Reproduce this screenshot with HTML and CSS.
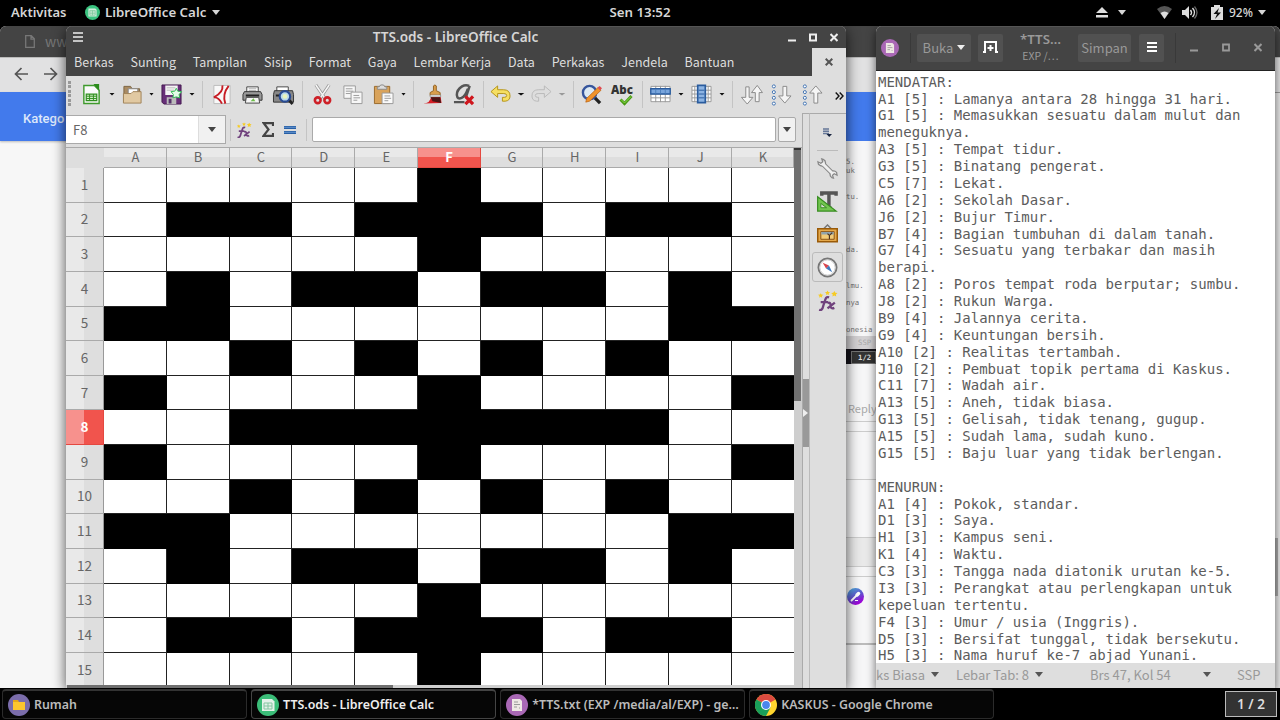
FILE: index.html
```html
<!DOCTYPE html>
<html lang="id">
  <head>
    <meta charset="UTF-8" />
    <title>Desktop</title>
    <meta name="viewport" content="width=device-width, initial-scale=1.0" />
    <link rel="stylesheet" href="styles.css">
  </head>
  <body>
    <header class="topbar">
      <span class="activities">Aktivitas</span>
      <svg class="app-icon" width="15" height="15" viewBox="0 0 22 22"><circle cx="11" cy="11" r="11" fill="#3bc480"/><path d="M5 5h10l2 2v10H5z" fill="#d7efdf"/><path d="M7 8h8v7H7zM7 10.3h8M7 12.7h8M11 8v7" fill="none" stroke="#75c797"/></svg>
      <span class="app-name">LibreOffice Calc</span>
      <i class="caret"></i>
      <span class="clock">Sen 13:52</span>
      <div class="tray">
        <svg width="12" height="11" viewBox="0 0 12 11"><path d="M6 0l6 6H0zM0 8h12v2.500H0z" fill="#ddd"/></svg>
        <i class="caret eject-caret"></i>
        <svg class="wifi" width="15" height="13" viewBox="0 0 15 13"><path d="M0 3Q7.500-3 15 3L7.500 13z" fill="#555"/><path d="M3.500 7q4-3 8 0l-4 6z" fill="#ddd"/></svg>
        <svg class="sound" width="16" height="13" viewBox="0 0 16 13"><path d="M0 4h3l4-4v13L3 9H0z" fill="#ddd"/><path d="M8.500 4q2 2.500 0 5M10.500 2q4 4.500 0 9" fill="none" stroke="#ddd" stroke-width="1.400"/><path d="M12.500.5q5 6 0 12" fill="none" stroke="#666" stroke-width="1.300"/></svg>
        <svg class="battery" width="12" height="15" viewBox="0 0 12 15"><path d="M0 2h3V0h6v2h3v13H0z" fill="#ddd"/><path d="M8 3L2.500 9H6l-2 5 6-6.500H6.500z" fill="#111"/></svg>
        <span>92%</span>
        <i class="caret"></i>
      </div>
    </header>

    <main class="desktop">
      <section class="chrome">
        <div class="chrome-tabs">
          <svg width="10" height="13" viewBox="0 0 10 13"><path d="M.7.700h5.600l3 3v8.600H.7zM6 .7v3.500h3.500" fill="none" stroke="#777" stroke-width="1.300"/></svg>
          <span>www</span>
        </div>
        <div class="chrome-nav">
          <svg width="14" height="14" viewBox="0 0 14 14"><path d="M14 7H1.500M7.500 1l-6 6 6 6" fill="none" stroke="#555" stroke-width="1.700"/></svg>
          <svg width="14" height="14" viewBox="0 0 14 14"><path d="M0 7h12.500M6.500 1l6 6-6 6" fill="none" stroke="#555" stroke-width="1.700"/></svg>
        </div>
        <div class="chrome-view">
          <div class="chrome-doc">
            <div class="chrome-head">Katego</div>
            <div class="page-strip">
              <div class="shot">
                <span class="shot-a">5.<br>uk</span>
                <span class="shot-b">tu.</span>
                <span class="shot-c">da.</span>
                <span class="shot-d">lmu.</span>
                <span class="shot-e">nya</span>
                <span class="shot-f">onesia</span>
                <span class="shot-status">SSP</span>
                <span class="shot-task"><b>1/2</b></span>
              </div>
              <div class="reply">Reply</div>
              <div class="line-gap"></div>
              <div class="box box-a"></div>
              <div class="box box-b"></div>
              <div class="box box-c"></div>
              <div class="line-gap"></div>
              <div class="author">
                <svg width="17" height="17" viewBox="0 0 17 17"><defs><linearGradient id="av" x1="0" y1="0" x2=".5" y2="1"><stop stop-color="#48b9e0"/><stop offset=".6" stop-color="#6350cf"/><stop offset="1" stop-color="#a000d8"/></linearGradient></defs><circle cx="8.500" cy="8.500" r="8.500" fill="url(#av)"/><path d="M4.500 12.500L9 8" stroke="#fff" stroke-width="1.800" stroke-linecap="round"/><path d="M10 7l1.500-1.500" stroke="#fff" stroke-width="3.500" stroke-linecap="round"/><path d="M8 12.500h3" stroke="#fff"/></svg>
              </div>
            </div>
          </div>
          <div class="page-scroll"><i></i></div>
        </div>
      </section>

      <section class="gedit">
        <div class="gedit-head">
          <svg class="gedit-icon" width="18" height="18" viewBox="0 0 22 22"><circle cx="11" cy="11" r="11" fill="#a968b5"/><path d="M6 5h8l2 2v10H6z" fill="#eee8e4"/><path d="M8 8h4M8 10.500h6M8 13h3M13 14h1" stroke="#999"/></svg>
          <i class="head-sep"></i>
          <button class="open-btn">Buka <i class="caret"></i></button>
          <button class="tab-btn"><svg width="15" height="12" viewBox="0 0 15 12"><path d="M0 11h2V1h11v10h2M7.500 4v6M4.500 7h6" fill="none" stroke="#fff" stroke-width="2"/></svg></button>
          <div class="doc-title"><b>*TTS…</b><small>EXP /…</small></div>
          <button class="save-btn">Simpan</button>
          <button class="menu-btn"><svg width="10" height="10" viewBox="0 0 10 10"><path d="M0 1h10M0 5h10M0 9h10" stroke="#fff" stroke-width="2"/></svg></button>
          <i class="head-sep sep-right"></i>
          <div class="win-btns">
            <svg width="8" height="9" viewBox="0 0 8 9"><path d="M0 7.500h8" stroke="#999" stroke-width="2"/></svg>
            <svg width="8" height="9" viewBox="0 0 8 9"><path d="M1 1.500h6v6H1z" fill="none" stroke="#999" stroke-width="1.800"/></svg>
            <svg width="8" height="9" viewBox="0 0 8 9"><path d="M.5 1l7 7M7.500 1l-7 7" stroke="#999" stroke-width="2"/></svg>
          </div>
        </div>
        <pre class="editor">MENDATAR:
A1 [5] : Lamanya antara 28 hingga 31 hari.
G1 [5] : Memasukkan sesuatu dalam mulut dan
meneguknya.
A3 [5] : Tempat tidur.
G3 [5] : Binatang pengerat.
C5 [7] : Lekat.
A6 [2] : Sekolah Dasar.
J6 [2] : Bujur Timur.
B7 [4] : Bagian tumbuhan di dalam tanah.
G7 [4] : Sesuatu yang terbakar dan masih
berapi.
A8 [2] : Poros tempat roda berputar; sumbu.
J8 [2] : Rukun Warga.
B9 [4] : Jalannya cerita.
G9 [4] : Keuntungan bersih.
A10 [2] : Realitas tertambah.
J10 [2] : Pembuat topik pertama di Kaskus.
C11 [7] : Wadah air.
A13 [5] : Aneh, tidak biasa.
G13 [5] : Gelisah, tidak tenang, gugup.
A15 [5] : Sudah lama, sudah kuno.
G15 [5] : Baju luar yang tidak berlengan.

MENURUN:
A1 [4] : Pokok, standar.
D1 [3] : Saya.
H1 [3] : Kampus seni.
K1 [4] : Waktu.
C3 [3] : Tangga nada diatonik urutan ke-5.
I3 [3] : Perangkat atau perlengkapan untuk
kepeluan tertentu.
F4 [3] : Umur / usia (Inggris).
D5 [3] : Bersifat tunggal, tidak bersekutu.
H5 [3] : Nama huruf ke-7 abjad Yunani.</pre>
        <div class="gedit-status">
          <span class="st-lang">ks Biasa</span><i class="caret"></i>
          <span class="st-tab">Lebar Tab: 8</span><i class="caret"></i>
          <span class="st-pos">Brs 47, Kol 54</span><i class="caret"></i>
          <span class="st-mode">SSP</span>
        </div>
      </section>

      <section class="calc">
        <div class="calc-title">
          <svg class="burger" width="10" height="10" viewBox="0 0 10 10"><path d="M0 1h10M0 5h10M0 9h10" stroke="#eee" stroke-width="1.700"/></svg>
          <span>TTS.ods - LibreOffice Calc</span>
          <div class="win-btns">
            <svg width="8" height="9" viewBox="0 0 8 9"><path d="M0 7.500h8" stroke="#eee" stroke-width="2"/></svg>
            <svg width="8" height="9" viewBox="0 0 8 9"><path d="M1 1.500h6v6H1z" fill="none" stroke="#eee" stroke-width="2"/></svg>
            <svg width="8" height="9" viewBox="0 0 8 9"><path d="M.5 1l7 7M7.500 1l-7 7" stroke="#eee" stroke-width="2"/></svg>
          </div>
        </div>
        <nav class="calc-menu">
          <span>Berkas</span><span>Sunting</span><span>Tampilan</span><span>Sisip</span><span>Format</span><span>Gaya</span><span>Lembar Kerja</span><span>Data</span><span>Perkakas</span><span>Jendela</span><span>Bantuan</span>
          <div class="doc-close"><svg width="8" height="8" viewBox="0 0 8 8"><path d="M.7.700l6.600 6.600M7.300.7L.7 7.300" stroke="#555" stroke-width="2"/></svg></div>
        </nav>

        <div class="toolbar">
          <i class="grip"></i>
          <div class="tool"><svg viewBox="0 0 22 22"><path d="M3 1.500h11l5 5v14H3z" fill="#fafafa" stroke="#3f9a2c" stroke-width="1.500"/><path d="M13 0h6v7z" fill="#2b8b1c"/><path d="M5.500 10.500h11v7h-11z" fill="#d3efc8" stroke="#308f20" stroke-width="1.300"/><path d="M5.500 12.800h11M5.500 15.200h11M9 10.500v7M13 10.500v7" stroke="#308f20"/></svg></div>
          <i class="drop"></i>
          <div class="tool w28"><svg viewBox="0 0 22 22"><path d="M2 19V2.500h7l1.500 2.500h8v14z" fill="#aa8b62" stroke="#7c633f"/><path d="M6.500 5h10v6h-10z" fill="#fff" stroke="#888"/><path d="M1.500 10h8l2-2h8.500v12h-18.500z" fill="#e1c9a2" stroke="#a08258"/></svg></div>
          <i class="drop w11"></i>
          <div class="tool w29"><svg viewBox="0 0 22 22"><path d="M1 1h20v20H3l-2-2z" fill="#672e78" stroke="#43194f"/><path d="M4.500 1.500h13v10h-13z" fill="#f4f4f4"/><path d="M6 4h9M6 6.500h8" stroke="#bbb"/><path d="M6 14h10v7H6z" fill="#bbb"/><path d="M8 15.500h3v5H8z" fill="#56336a"/><path d="M16 4.500l1.500 3 4 .5-2.500 3 .5 3.500-3.500-1-3.500 1 .5-3.500-2.500-3 4-.5z" fill="#e4fbe9" stroke="#2fbd55"/></svg></div>
          <i class="drop"></i>
          <i class="sep"></i>
          <div class="tool"><svg viewBox="0 0 22 22"><path d="M3 1.500h17v19H3z" fill="#f8f8f8" stroke="#bbb"/><path d="M12 1.500Q13 9 3 14q5-.5 8.500 6.500M18.500 2Q11.500 11 15 20.500" fill="none" stroke="#c71d25" stroke-width="2"/></svg></div>
          <div class="tool w32"><svg viewBox="0 0 22 22"><path d="M5 9V3h12v6" fill="#fff" stroke="#444"/><path d="M7 5h8M7 7h8" stroke="#aaa"/><path d="M2.500 8h17l1.500 3v6H1v-6z" fill="#999" stroke="#333"/><path d="M4 11h14v2H4z" fill="#222"/><path d="M4.500 14h13l1 6h-15z" fill="#f5f5f5" stroke="#444"/><path d="M9 18l3-3 2 3z" fill="#6fbf4b"/></svg></div>
          <div class="tool"><svg viewBox="0 0 22 22"><path d="M4 8V3h12v5" fill="#fff" stroke="#444"/><path d="M1.500 7h19l1 4v8H.5v-8z" fill="#888" stroke="#333"/><path d="M3 11h8v2H3z" fill="#222"/><path d="M16 16l4.500 5" stroke="#222" stroke-width="3"/><circle cx="12.500" cy="13" r="5.500" fill="#b8d8ed" stroke="#294b93" stroke-width="2.200"/><circle cx="12.500" cy="13" r="2.500" fill="#e7f3bd"/></svg></div>
          <i class="sep w9"></i>
          <div class="tool"><svg viewBox="0 0 22 22"><path d="M4 1l9.500 14M18 1L8.500 15" stroke="#999" stroke-width="3.200"/><path d="M4 1l9.500 14M18 1L8.500 15" stroke="#f5f5f5" stroke-width="1.600"/><circle cx="6" cy="17" r="3" fill="none" stroke="#ce2027" stroke-width="2.700"/><circle cx="16" cy="17" r="3" fill="none" stroke="#ce2027" stroke-width="2.700"/></svg></div>
          <div class="tool w31"><svg viewBox="0 0 22 22"><path d="M2 2h12v13H2z" fill="#f7f7f7" stroke="#999"/><path d="M4 5h7M4 7.500h8M4 10h5" stroke="#999"/><path d="M9.500 8.500H21v12H9.500z" fill="#f7f7f7" stroke="#999"/><path d="M12 12h6M12 14.500h7M12 17h4" stroke="#999"/></svg></div>
          <div class="tool"><svg viewBox="0 0 22 22"><path d="M1.500 2.500h16v18h-16z" fill="#d9a35b" stroke="#98692a"/><path d="M4.500 5.500V3h2l1.500-2h3l1.500 2h2v2.500z" fill="#ddd" stroke="#888"/><path d="M9.500 9.500H21v11H9.500z" fill="#fafafa" stroke="#999"/><path d="M12 12.500h6M12 15h7M12 17.500h4" stroke="#999"/></svg></div>
          <i class="drop w11"></i>
          <i class="sep"></i>
          <div class="tool w31"><svg viewBox="0 0 22 22"><path d="M1 20.500Q9 20 9.500 13h10l1 7z" fill="#d61f26"/><path d="M12 7V2q1.500-2 3 0v5l4 2v3H8.500V9z" fill="#d89d4b" stroke="#936322"/><path d="M8.500 11.500h11v2h-11z" fill="#eee" stroke="#777" stroke-width=".6"/><path d="M9 14h10l1 6-9-2z" fill="#4b1616"/></svg></div>
          <div class="tool w31"><svg viewBox="0 0 22 22"><path d="M17 2Q13 .5 9.500 2.500 4 6 4 11.500q.5 5 5 3 4-2 6.500-9.500M17.500 2l-3.500 10.500q-.5 2.500 2 2" fill="none" stroke="#555" stroke-width="2.600"/><path d="M1 19h11" stroke="#555" stroke-width="2.500"/><path d="M13 13l8 8M21 13l-8 8" stroke="#cf171e" stroke-width="3.400"/></svg></div>
          <i class="sep"></i>
          <div class="tool w27"><svg viewBox="0 0 22 22"><path d="M1 8l7-6v4h6q7 0 7 6.500 0 5-5 5.500h-3v-4h2q2.500 0 2.500-2t-3-2H8v4z" fill="#f6df63" stroke="#b49317"/></svg></div>
          <i class="drop w14"></i>
          <div class="tool w27 faded"><svg viewBox="0 0 22 22"><path d="M21 8l-7-6v4H8q-7 0-7 6.500Q1 17.500 6 18h2v-4H7q-2.500 0-2.500-2t3-2H14v4z" fill="#ddd" stroke="#aaa"/></svg></div>
          <i class="drop w14 off"></i>
          <i class="sep"></i>
          <div class="tool w29"><svg viewBox="0 0 22 22"><path d="M14 14l6 6" stroke="#222" stroke-width="3.500"/><circle cx="9" cy="9" r="7" fill="#dce9f3" stroke="#36559c" stroke-width="2.500"/><path d="M5 19l1-4L18 3.500l3 3L9 18z" fill="#f0932b" stroke="#b56012" stroke-width=".7"/><path d="M17.500 4l2-2 2.500 2.500-2 2z" fill="#e04a51"/></svg></div>
          <div class="tool w32 abc"><b>Abc</b><svg viewBox="0 0 14 10"><path d="M1.500 4.500l4 4L12.500 1" fill="none" stroke="#4a9a16" stroke-width="3"/><path d="M2 4.500l3.500 3.500L12 1.500" fill="none" stroke="#87db46"/></svg></div>
          <i class="sep"></i>
          <div class="tool w29"><svg viewBox="0 0 22 22"><path d="M1 2.500h20v16H1z" fill="#fff" stroke="#999"/><path d="M1 14.500h20M1 10.500h20M6 2v17M11 2v17M16 2v17" stroke="#999"/><path d="M.8 5h20.400v5.500H.8z" fill="#79a5dc" stroke="#2a5c9e" stroke-width="1.400"/><path d="M6 6v4M11 6v4M16 6v4" stroke="#4f81bd"/></svg></div>
          <i class="drop"></i>
          <div class="tool w29"><svg viewBox="0 0 22 22"><path d="M1 2.500h20v16H1z" fill="#fff" stroke="#999"/><path d="M1 6.500h20M1 10.500h20M1 14.500h20M4 2v17M18 2v17" stroke="#999"/><path d="M7 1.500h8v18H7z" fill="#8db4e3" stroke="#2a5c9e" stroke-width="1.800"/><path d="M8 6.500h6M8 10.500h6M8 14.500h6" stroke="#2a5c9e"/></svg></div>
          <i class="drop"></i>
          <i class="sep"></i>
          <div class="tool"><svg viewBox="0 0 22 22"><path d="M15 18.500V9h-4l6-7.500L22.500 9H19v9.500z" fill="#f5f5f5" stroke="#888"/><path d="M5 3h3.500v11h4L6.500 21 .5 14H5z" fill="#f5f5f5" stroke="#888"/></svg></div>
          <div class="tool w31"><svg viewBox="0 0 22 22"><g fill="#fff" stroke="#3e70b0"><circle cx="3" cy="2.500" r="1.600"/><circle cx="3" cy="8.500" r="1.600"/><circle cx="3" cy="14.500" r="1.600"/><circle cx="3" cy="20.500" r="1.600"/></g><path d="M12.500 2.500h4v10H21l-6.500 7.500L8 12.500h4.500z" fill="#f5f5f5" stroke="#888"/></svg></div>
          <div class="tool w31"><svg viewBox="0 0 22 22"><g fill="#fff" stroke="#3e70b0"><circle cx="3" cy="2.500" r="1.600"/><circle cx="3" cy="8.500" r="1.600"/><circle cx="3" cy="14.500" r="1.600"/><circle cx="3" cy="20.500" r="1.600"/></g><path d="M12.500 20V9.500H8L14.500 2 21 9.500h-4.500V20z" fill="#f5f5f5" stroke="#888"/></svg></div>
          <svg class="more" width="9" height="8" viewBox="0 0 9 8"><path d="M.7.500L4 4 .7 7.500M4.700.5L8 4 4.700 7.500" fill="none" stroke="#111" stroke-width="1.400"/></svg>
        </div>

        <div class="calc-body">
          <div class="sheet-side">
            <div class="formula-bar">
              <div class="name-box"><span>F8</span><div class="name-drop"><i class="caret"></i></div></div>
              <i class="formula-sep"></i>
              <svg width="16" height="16" viewBox="0 0 20 20"><use href="#fx"/></svg>
              <svg width="12" height="15" viewBox="0 0 12 15"><path d="M11 4V1.200H1.800L6.500 7.500l-5 6.300H11V11" fill="none" stroke="#444" stroke-width="2.200"/></svg>
              <svg width="12" height="8" viewBox="0 0 12 8"><path d="M0 1.500h12M0 6.500h12" stroke="#285fa5" stroke-width="2.800"/><path d="M0 1.300h12M0 6.300h12" stroke="#6394cf"/></svg>
              <i class="formula-sep"></i>
              <div class="formula-input"></div>
              <div class="formula-drop"><i class="caret"></i></div>
            </div>
            <div class="sheet">
              <div class="col-heads" id="colHeads"></div>
              <div class="row-heads" id="rowHeads"></div>
              <div class="cells" id="cells"></div>
              <div class="vscroll"><i></i></div>
            </div>
            <div class="hscroll"><i></i></div>
          </div>
          <div class="splitter"><i></i></div>
          <aside class="sidebar">
            <svg class="side-menu" width="9" height="9" viewBox="0 0 9 9"><path d="M0 1h6M0 3.300h6M0 5.600h6" stroke="#667798" stroke-width="1.500"/><path d="M3.500 6h5.500L6.200 9z" fill="#17233f"/></svg>
            <i class="side-line"></i>
            <div class="side-tab"><svg viewBox="0 0 22 22"><path d="M6 6l10 10" stroke="#888" stroke-width="5"/><path d="M6.500 1.500Q10 3 8.500 7.500 5 10 1.500 6.500L1 4l3 1.500L6 4 5 1zM15.500 20.500q-3-2-1-5.500 3-3 6 0l.5 3-3-1.500-1.800 1.500 1 3z" fill="#eee" stroke="#888" stroke-width="1.300"/><path d="M6 6l10.500 10.500" stroke="#efefef" stroke-width="3"/></svg></div>
            <div class="side-tab"><svg viewBox="0 0 22 22"><path d="M5 5V2h15v3M12.500 2v16M9.500 18h6" fill="none" stroke="#555" stroke-width="3.600"/><path d="M.7 6v15H20z" fill="#72c650" stroke="#398d21" stroke-width="1.300"/><path d="M4 13v4.500h6z" fill="#ddd" stroke="#398d21"/></svg></div>
            <div class="side-tab"><svg viewBox="0 0 22 22"><path d="M7 5l4-4 4 4" fill="none" stroke="#777" stroke-width="1.500"/><path d="M.8 5h20.400v13.500H.8z" fill="#e5a94b" stroke="#9a5a07" stroke-width="1.600"/><path d="M4 8h14v8H4z" fill="#f2cb78" stroke="#855016"/><path d="M4.500 8.500h13v2.500h-13z" fill="#8fa3ae"/><path d="M13 16v-4l-2-2M13 12l3-3" fill="none" stroke="#4b3220" stroke-width="1.200"/></svg></div>
            <div class="side-tab active"><svg viewBox="0 0 22 22"><circle cx="11" cy="11" r="9.500" fill="#fff" stroke="#777" stroke-width="2"/><circle cx="11" cy="11" r="8" fill="none" stroke="#ccc"/><path d="M6 6l6.500 3-3 3z" fill="#d9434c"/><path d="M16 16l-6.500-4 3-3z" fill="#3f79bc"/></svg></div>
            <div class="side-tab"><svg viewBox="0 0 20 20"><g id="fx"><path d="M2 19q3 1 4-4L8 9q1-3 3.500-2M3.500 11.500h7M10 12.500q3-1.500 3 2.500 0 3.500 3.500 2M17 12l-7 5.500" fill="none" stroke="#70427d" stroke-width="2.200"/><path d="M3.500 3l.8 1.300 1.700.2-1.300 1.200.2 1.600-1.400-.8-1.400.8.200-1.600L1 4.500l1.700-.2zM10 .5l.8 1.300 1.700.2-1.300 1.200.2 1.600L10 4l-1.400.8.200-1.600L7.500 2l1.700-.2zM16.500 1l1 1.500 2 .3L18 4.200l.3 2.100-1.800-1-1.800 1 .3-2.100-1.500-1.400 2-.3z" fill="#f6cb24"/></g></svg></div>
          </aside>
        </div>
      </section>
    </main>

    <footer class="taskbar">
      <div class="task"><svg viewBox="0 0 22 22"><circle cx="11" cy="11" r="11" fill="#7b6dab"/><path d="M5 6h5l1 2h6v8H5z" fill="#e6a81a"/><path d="M5 8h12v8H5z" fill="#fdc62f"/></svg><span>Rumah</span></div>
      <div class="task current"><svg viewBox="0 0 22 22"><circle cx="11" cy="11" r="11" fill="#3bbd78"/><path d="M5 5h10l2.500 2.500V17H5z" fill="#e4f1e9"/><path d="M7 9h8v6H7zM7 12h8M11 9v6" fill="none" stroke="#83c6a1"/></svg><span>TTS.ods - LibreOffice Calc</span></div>
      <div class="task"><svg viewBox="0 0 22 22"><circle cx="11" cy="11" r="11" fill="#a968b5"/><path d="M6 5h8l2 2v10H6z" fill="#eee8e4"/><path d="M8 8h4M8 10.500h6M8 13h3M13 14h1" stroke="#999"/></svg><span>*TTS.txt (EXP /media/al/EXP) - ge…</span></div>
      <div class="task"><svg viewBox="0 0 22 22"><circle cx="11" cy="11" r="11" fill="#ffd52e"/><path d="M11 11L1.470 5.500A11 11 0 0 1 20.530 5.500z" fill="#db4b40"/><path d="M20.500 5.500H11l-1 3z" fill="#db4b40"/><path d="M1.470 5.500A11 11 0 0 0 11 22l4.500-8.500L11 11z" fill="#199f5a"/><circle cx="11" cy="11" r="5" fill="#fff"/><circle cx="11" cy="11" r="3.900" fill="#4a86ec"/></svg><span>KASKUS - Google Chrome</span></div>
      <div class="workspace">1 / 2</div>
    </footer>

    <script>
      // "#" = filled square, "." = empty square
      const puzzle = [
        ".....#.....",
        ".##.###.##.",
        ".....#.....",
        ".#.##.##.#.",
        "##.......##",
        "..#.#.#.#..",
        "#....#....#",
        "..#######..",
        "#....#....#",
        "..#.#.#.#..",
        "##.......##",
        ".#.##.##.#.",
        ".....#.....",
        ".##.###.##.",
        ".....#.....",
      ];

      const cells = document.getElementById("cells");
      const colHeads = document.getElementById("colHeads");
      const rowHeads = document.getElementById("rowHeads");

      function addBox(parent, className, text) {
        const box = document.createElement("div");
        box.className = className;
        box.textContent = text;
        parent.appendChild(box);
      }

      "ABCDEFGHIJK".split("").forEach((c) => addBox(colHeads, c === "F" ? "head selected" : "head", c));

      puzzle.forEach((row, i) => {
        addBox(rowHeads, i === 7 ? "head selected" : "head", i + 1);
        row.split("").forEach((c) => addBox(cells, c === "#" ? "cell filled" : "cell", ""));
      });
    </script>
  </body>
</html>
```
FILE: styles.css
```css
* {
  box-sizing: border-box;
}

body {
  margin: 0;
  width: 1280px;
  height: 720px;
  overflow: hidden;
  display: flex;
  flex-direction: column;
  background: #000;
  font-family: "Noto Sans CJK SC", "Noto Sans", sans-serif;
  font-size: 13px;
  white-space: nowrap;
}

svg {
  display: block;
  flex: none;
}

i {
  flex: none;
}

.caret {
  display: inline-block;
  border: 4.5px solid transparent;
  border-top: 5px solid currentColor;
  border-bottom: 0;
}

/* top bar */
.topbar {
  position: relative;
  height: 26px;
  display: flex;
  align-items: center;
  padding: 0 8px 2px 11px;
  color: #d6d6d6;
  font-family: "Noto Sans", sans-serif;
  font-size: 13.3px;
  font-weight: 600;
}

.activities {
  width: 55px;
  font-size: 13px;
}

.app-icon {
  margin: 0 5px 0 19px;
}

.app-name {
  width: 103px;
  margin-right: 4px;
}

.clock {
  position: absolute;
  left: 0;
  right: 0;
  text-align: center;
}

.tray {
  display: flex;
  align-items: center;
  margin-left: auto;
  font-size: 12px;
  font-weight: 500;
  padding-right: 6px;
}

.eject-caret {
  margin: 0 31px 0 10px;
}

.sound {
  margin: 0 13px 0 10px;
}

.battery {
  margin-right: 6px;
}

.tray span {
  width: 26px;
  margin-right: 3px;
}

/* windows */
.desktop {
  position: relative;
  height: 662px;
  overflow: hidden;
}

.chrome {
  position: absolute;
  inset: 0;
  background: #f7f7f7;
  border-radius: 6px 6px 0 0;
  overflow: hidden;
}

.chrome-tabs {
  height: 31px;
  background: #444;
  color: #777;
  display: flex;
  align-items: center;
  gap: 10px;
  padding: 0 0 1px 25px;
  font-size: 14px;
}

.chrome-nav {
  height: 35px;
  background: #e1e1e2;
  border-top: 1px solid #bbb;
  display: flex;
  align-items: center;
  gap: 16px;
  padding: 0 0 2px 14px;
}

.chrome-view {
  display: flex;
  height: 596px;
}

.chrome-doc {
  flex: 1;
}

.chrome-head {
  height: 49px;
  background: #427aec;
  color: #dde7fa;
  font: 500 13px/53px Roboto, sans-serif;
  padding-left: 23px;
  box-shadow: 0 1px 2px #bbb;
}

.page-scroll {
  width: 6px;
  background: #e8e8e8;
  border-top: 1px solid #999;
  padding-top: 445px;
}

.page-scroll i {
  display: block;
  width: 4px;
  height: 58px;
  background: #aaa;
}

.page-strip {
  width: 30px;
  height: 547px;
  margin-left: 846px;
  display: flex;
  flex-direction: column;
  background: #f6f6f7;
}

.shot {
  height: 223px;
  flex: none;
  padding-top: 16px;
  display: flex;
  flex-direction: column;
  font: 7.3px/9px "DejaVu Sans Mono", monospace;
  color: #777;
}

.shot-b {
  margin-top: 17px;
}

.shot-c {
  margin-top: 44px;
}

.shot-d {
  margin-top: 27px;
}

.shot-e {
  margin-top: 8px;
}

.shot-f {
  margin-top: 18px;
}

.shot-status {
  margin-top: 2px;
  height: 14px;
  line-height: 13px;
  padding-left: 12px;
  background: #d3d1d3;
  color: #aaa;
}

.shot-task {
  height: 16px;
  background: #15131a;
  padding: 2px 0 0 5px;
}

.shot-task b {
  display: block;
  border: 1px solid #777;
  height: 13px;
  padding-left: 6px;
  line-height: 11px;
  background: #333;
  color: #ddd;
}

.reply {
  height: 58px;
  flex: none;
  padding: 37px 0 0 2px;
  color: #aaa;
  font-size: 11px;
  line-height: 14px;
  border-bottom: 1px solid #ccc;
}

.line-gap {
  height: 10px;
  border-bottom: 1px solid #ccc;
  flex: none;
}

.box {
  flex: none;
  border-bottom: 1px solid #ccc;
}

.box-a {
  height: 48px;
}

.box-b {
  height: 58px;
}

.box-c {
  height: 29px;
  background: #e9e9e9;
}

.author {
  height: 68px;
  flex: none;
  padding: 11px 0 0 1px;
  border-bottom: 2px solid #bbb;
}

/* text editor */
.gedit {
  position: absolute;
  left: 876px;
  top: 0;
  width: 399px;
  height: 662px;
  display: flex;
  flex-direction: column;
  background: #fff;
  border-radius: 6px 6px 0 0;
  box-shadow: 0 3px 10px rgba(0, 0, 0, 0.6);
  overflow: hidden;
}

.gedit-head {
  height: 45px;
  flex: none;
  display: flex;
  align-items: center;
  background: #444;
  border-top: 1px solid #555;
  border-bottom: 1px solid #222;
  padding: 0 0 2px 5px;
  color: #999;
}

.head-sep {
  width: 1px;
  height: 30px;
  background: #393939;
  margin: 0 6px 0 11px;
}

.sep-right {
  margin: 0 14px 0 11px;
}

.gedit-head button {
  height: 28px;
  padding: 0 0 1px;
  border: 0;
  border-radius: 2px;
  background: #515151;
  color: #999;
  font: 13px "Noto Sans CJK SC", sans-serif;
  display: flex;
  align-items: center;
  justify-content: center;
}

.open-btn .caret {
  color: #eee;
  margin-left: 4px;
}

.gedit-head .open-btn {
  width: 54px;
}

.gedit-head .tab-btn {
  width: 25px;
  margin-left: 7px;
}

.doc-title {
  width: 75px;
  display: flex;
  flex-direction: column;
  align-items: center;
  line-height: 16px;
}

.doc-title b {
  font: 600 13.3px/17px "Noto Sans", sans-serif;
}

.doc-title small {
  font-size: 10.5px;
}

.gedit-head .save-btn {
  width: 53px;
}

.gedit-head .menu-btn {
  width: 25px;
  margin-left: 8px;
}

.win-btns {
  display: flex;
}

.gedit .win-btns {
  gap: 24px;
}

.editor {
  height: 592px;
  flex: none;
  margin: 0;
  padding: 2.7px 0 0 2px;
  overflow: hidden;
  font: 14px/16.88px "DejaVu Sans Mono", monospace;
  color: #5c5c5c;
}

.gedit-status {
  height: 25px;
  display: flex;
  align-items: center;
  background: #dedede;
  color: #999;
  padding-bottom: 2px;
}

.gedit-status .caret {
  color: #555;
}

.st-lang {
  width: 55px;
}

.st-tab {
  width: 79px;
  margin-left: 17px;
}

.st-pos {
  width: 113px;
  margin-left: 47px;
}

.st-mode {
  margin-left: 26px;
}

/* calc */
.calc {
  position: absolute;
  left: 66px;
  top: 0;
  width: 780px;
  height: 662px;
  display: flex;
  flex-direction: column;
  background: #dedede;
  border-radius: 6px 6px 0 0;
  box-shadow: 0 3px 14px rgba(0, 0, 0, 0.7);
  overflow: hidden;
}

.calc-title {
  height: 22px;
  flex: none;
  display: flex;
  align-items: center;
  background: #444;
  border-top: 1px solid #555;
  padding: 0 8px 1px 7px;
  color: #d6d6d6;
  font: 600 13.6px "Noto Sans", sans-serif;
}

.calc-title span {
  flex: 1;
  text-align: center;
  padding: 0 0 2px 40px;
}

.calc .win-btns {
  gap: 13px;
}

.calc-menu {
  height: 28px;
  flex: none;
  display: flex;
  align-items: center;
  gap: 16.8px;
  background: #444;
  color: #ddd;
  padding-left: 8px;
  font-size: 12.5px;
}

.calc-menu span {
  padding-bottom: 2px;
}

.doc-close {
  width: 34px;
  height: 28px;
  margin-left: auto;
  background: #dedede;
  display: flex;
  align-items: center;
  justify-content: center;
}

.toolbar {
  height: 37px;
  flex: none;
  display: flex;
  align-items: center;
  padding-bottom: 1px;
}

.grip {
  width: 3px;
  height: 26px;
  margin: 0 5px 0 2px;
  background: repeating-linear-gradient(#999 0 3px, transparent 3px 4.5px);
}

.tool {
  width: 30px;
  flex: none;
  display: flex;
  justify-content: center;
}

.tool svg {
  width: 21px;
  height: 21px;
  overflow: visible;
}

.drop {
  width: 12px;
  height: 3px;
  background: #111;
  clip-path: polygon(3px 0, calc(100% - 3px) 0, 50% 100%);
}

.drop.off {
  background: #999;
}

.sep {
  width: 8px;
  height: 27px;
  background: linear-gradient(#c4c4c4, #c4c4c4) center / 1px 100% no-repeat;
}

.w9 { width: 9px; }
.w11 { width: 11px; }
.w14 { width: 14px; }
.w27 { width: 27px; }
.w28 { width: 28px; }
.w29 { width: 29px; }
.w31 { width: 31px; }
.w32 { width: 32px; }

.faded {
  opacity: 0.7;
}

.tool.abc {
  flex-direction: column;
  align-items: center;
  color: #333;
  font: bold 11.5px/11px "Noto Sans", sans-serif;
}

.abc svg {
  width: 14px;
  height: 10px;
  margin-left: 8px;
}

.more {
  margin: 3px 0 0 7px;
}

.calc-body {
  flex: 1;
  display: flex;
  min-height: 0;
}

.sheet-side {
  width: 736px;
  display: flex;
  flex-direction: column;
}

.formula-bar {
  height: 35px;
  flex: none;
  display: flex;
  align-items: center;
  gap: 10px;
  border-bottom: 1px solid #aaa;
  padding: 0 6px 1px 0;
}

.name-box {
  width: 160px;
  height: 29px;
  display: flex;
  align-items: center;
  justify-content: space-between;
  background: #fff;
  border: 1px solid #aaa;
  border-left: 0;
  padding-left: 7px;
  color: #666;
  margin-right: -6px;
}

.name-drop {
  width: 27px;
  height: 27px;
  display: flex;
  align-items: center;
  justify-content: center;
  background: #f1f1f1;
  border-left: 1px solid #ddd;
  color: #444;
}

.formula-sep {
  width: 1px;
  height: 22px;
  background: #c4c4c4;
  margin-right: -5px;
}

.formula-input {
  flex: 1;
  height: 25px;
  background: #fff;
  border: 1px solid #aaa;
  border-radius: 2px;
}

.formula-drop {
  width: 18px;
  height: 25px;
  margin-left: -8px;
  border: 1px solid #aaa;
  border-radius: 2px;
  background: #f1f1f1;
  display: flex;
  align-items: center;
  justify-content: center;
  color: #444;
}

.sheet {
  height: 537px;
  flex: none;
  display: grid;
  grid-template-columns: 38px 690px 8px;
  grid-template-rows: 20px 517px;
  overflow: hidden;
}

.col-heads {
  grid-column: 2;
  display: grid;
  grid-template-columns: repeat(11, 62.75px);
  overflow: hidden;
}

.row-heads {
  grid-column: 1;
  display: grid;
  grid-template-rows: repeat(15, 34.63px);
  overflow: hidden;
}

.head {
  display: flex;
  align-items: center;
  justify-content: center;
  color: #666;
  padding-bottom: 2px;
}

.col-heads .head {
  padding-left: 1px;
  line-height: 17px;
  background: linear-gradient(#e9e9e9 50%, #dedede 50%);
  border-right: 1px solid #aaa;
  border-bottom: 1px solid #aaa;
}

.row-heads .head {
  background: linear-gradient(90deg, #e9e9e9 50%, #dedede 50%);
  border-right: 1px solid #999;
  border-bottom: 1px solid #aaa;
  font-size: 13.5px;
}

.head.selected {
  color: #fff;
  font-weight: bold;
}

.col-heads .selected {
  background: linear-gradient(#f7918d 50%, #f1544d 50%);
  border-color: #e44840;
}

.row-heads .selected {
  background: linear-gradient(90deg, #f7918d 50%, #f1544d 50%);
  border-color: #e44840;
}

.cells {
  grid-column: 2;
  grid-row: 2;
  display: grid;
  grid-template-columns: repeat(11, 62.75px);
  grid-template-rows: repeat(15, 34.63px);
  overflow: hidden;
}

.cell {
  background: #fff;
  border-right: 1px solid #222;
  border-bottom: 1px solid #222;
}

.cell:nth-child(11n) {
  border-right: 0;
}

.filled {
  background: #000;
  border-color: #000;
}

.vscroll {
  grid-column: 3;
  grid-row: 1 / 3;
  background: #cecece;
}

.vscroll i {
  display: block;
  width: 7px;
  height: 253px;
  background: #707070;
  border-top: 2px solid #333;
}

.hscroll {
  flex: 1;
  background: #cecece;
  padding-left: 1px;
}

.hscroll i {
  display: block;
  width: 326px;
  height: 3px;
  background: #707070;
}

.splitter {
  width: 8px;
  border: 1px solid #aaa;
  border-bottom: 0;
  border-right-color: #bbb;
  padding-top: 265px;
}

.splitter i {
  display: flex;
  align-items: center;
  height: 68px;
  width: 6px;
  background: #999;
}

.splitter i::before {
  content: "";
  border: 4px solid transparent;
  border-left: 5px solid #eee;
  border-right: 0;
}

.sidebar {
  flex: 1;
  display: flex;
  flex-direction: column;
  align-items: center;
  border-top: 1px solid #aaa;
  padding: 14px 2px 0 0;
}

.side-menu {
  margin-bottom: 13px;
}

.side-line {
  width: 21px;
  height: 1px;
  background: #bbb;
  margin-bottom: 2px;
}

.side-tab {
  width: 31px;
  height: 30px;
  margin-bottom: 3px;
  display: flex;
  align-items: center;
  justify-content: center;
}

.side-tab svg {
  width: 21px;
  height: 21px;
}

.side-tab.active {
  border: 1px solid #bbb;
  border-radius: 3px;
}

/* window list */
.taskbar {
  height: 32px;
  display: flex;
  align-items: center;
  gap: 4px;
  padding: 0 3px 0 2px;
  color: #bbb;
  font: 600 12.4px "Noto Sans", sans-serif;
}

.task {
  width: 245.1px;
  height: 30px;
  display: flex;
  align-items: center;
  gap: 4px;
  padding-left: 5px;
  background: #060606;
  border: 1px solid #2b2b2b;
  border-top: 2px solid #333;
  border-radius: 4px;
}

.task svg {
  width: 22px;
  height: 22px;
}

.current {
  color: #eee;
  border-color: #444;
}

.workspace {
  width: 52px;
  height: 26px;
  margin-left: auto;
  display: flex;
  align-items: center;
  justify-content: center;
  background: #333;
  border: 1px solid #bbb;
  color: #ddd;
  font-size: 13.5px;
}
```
